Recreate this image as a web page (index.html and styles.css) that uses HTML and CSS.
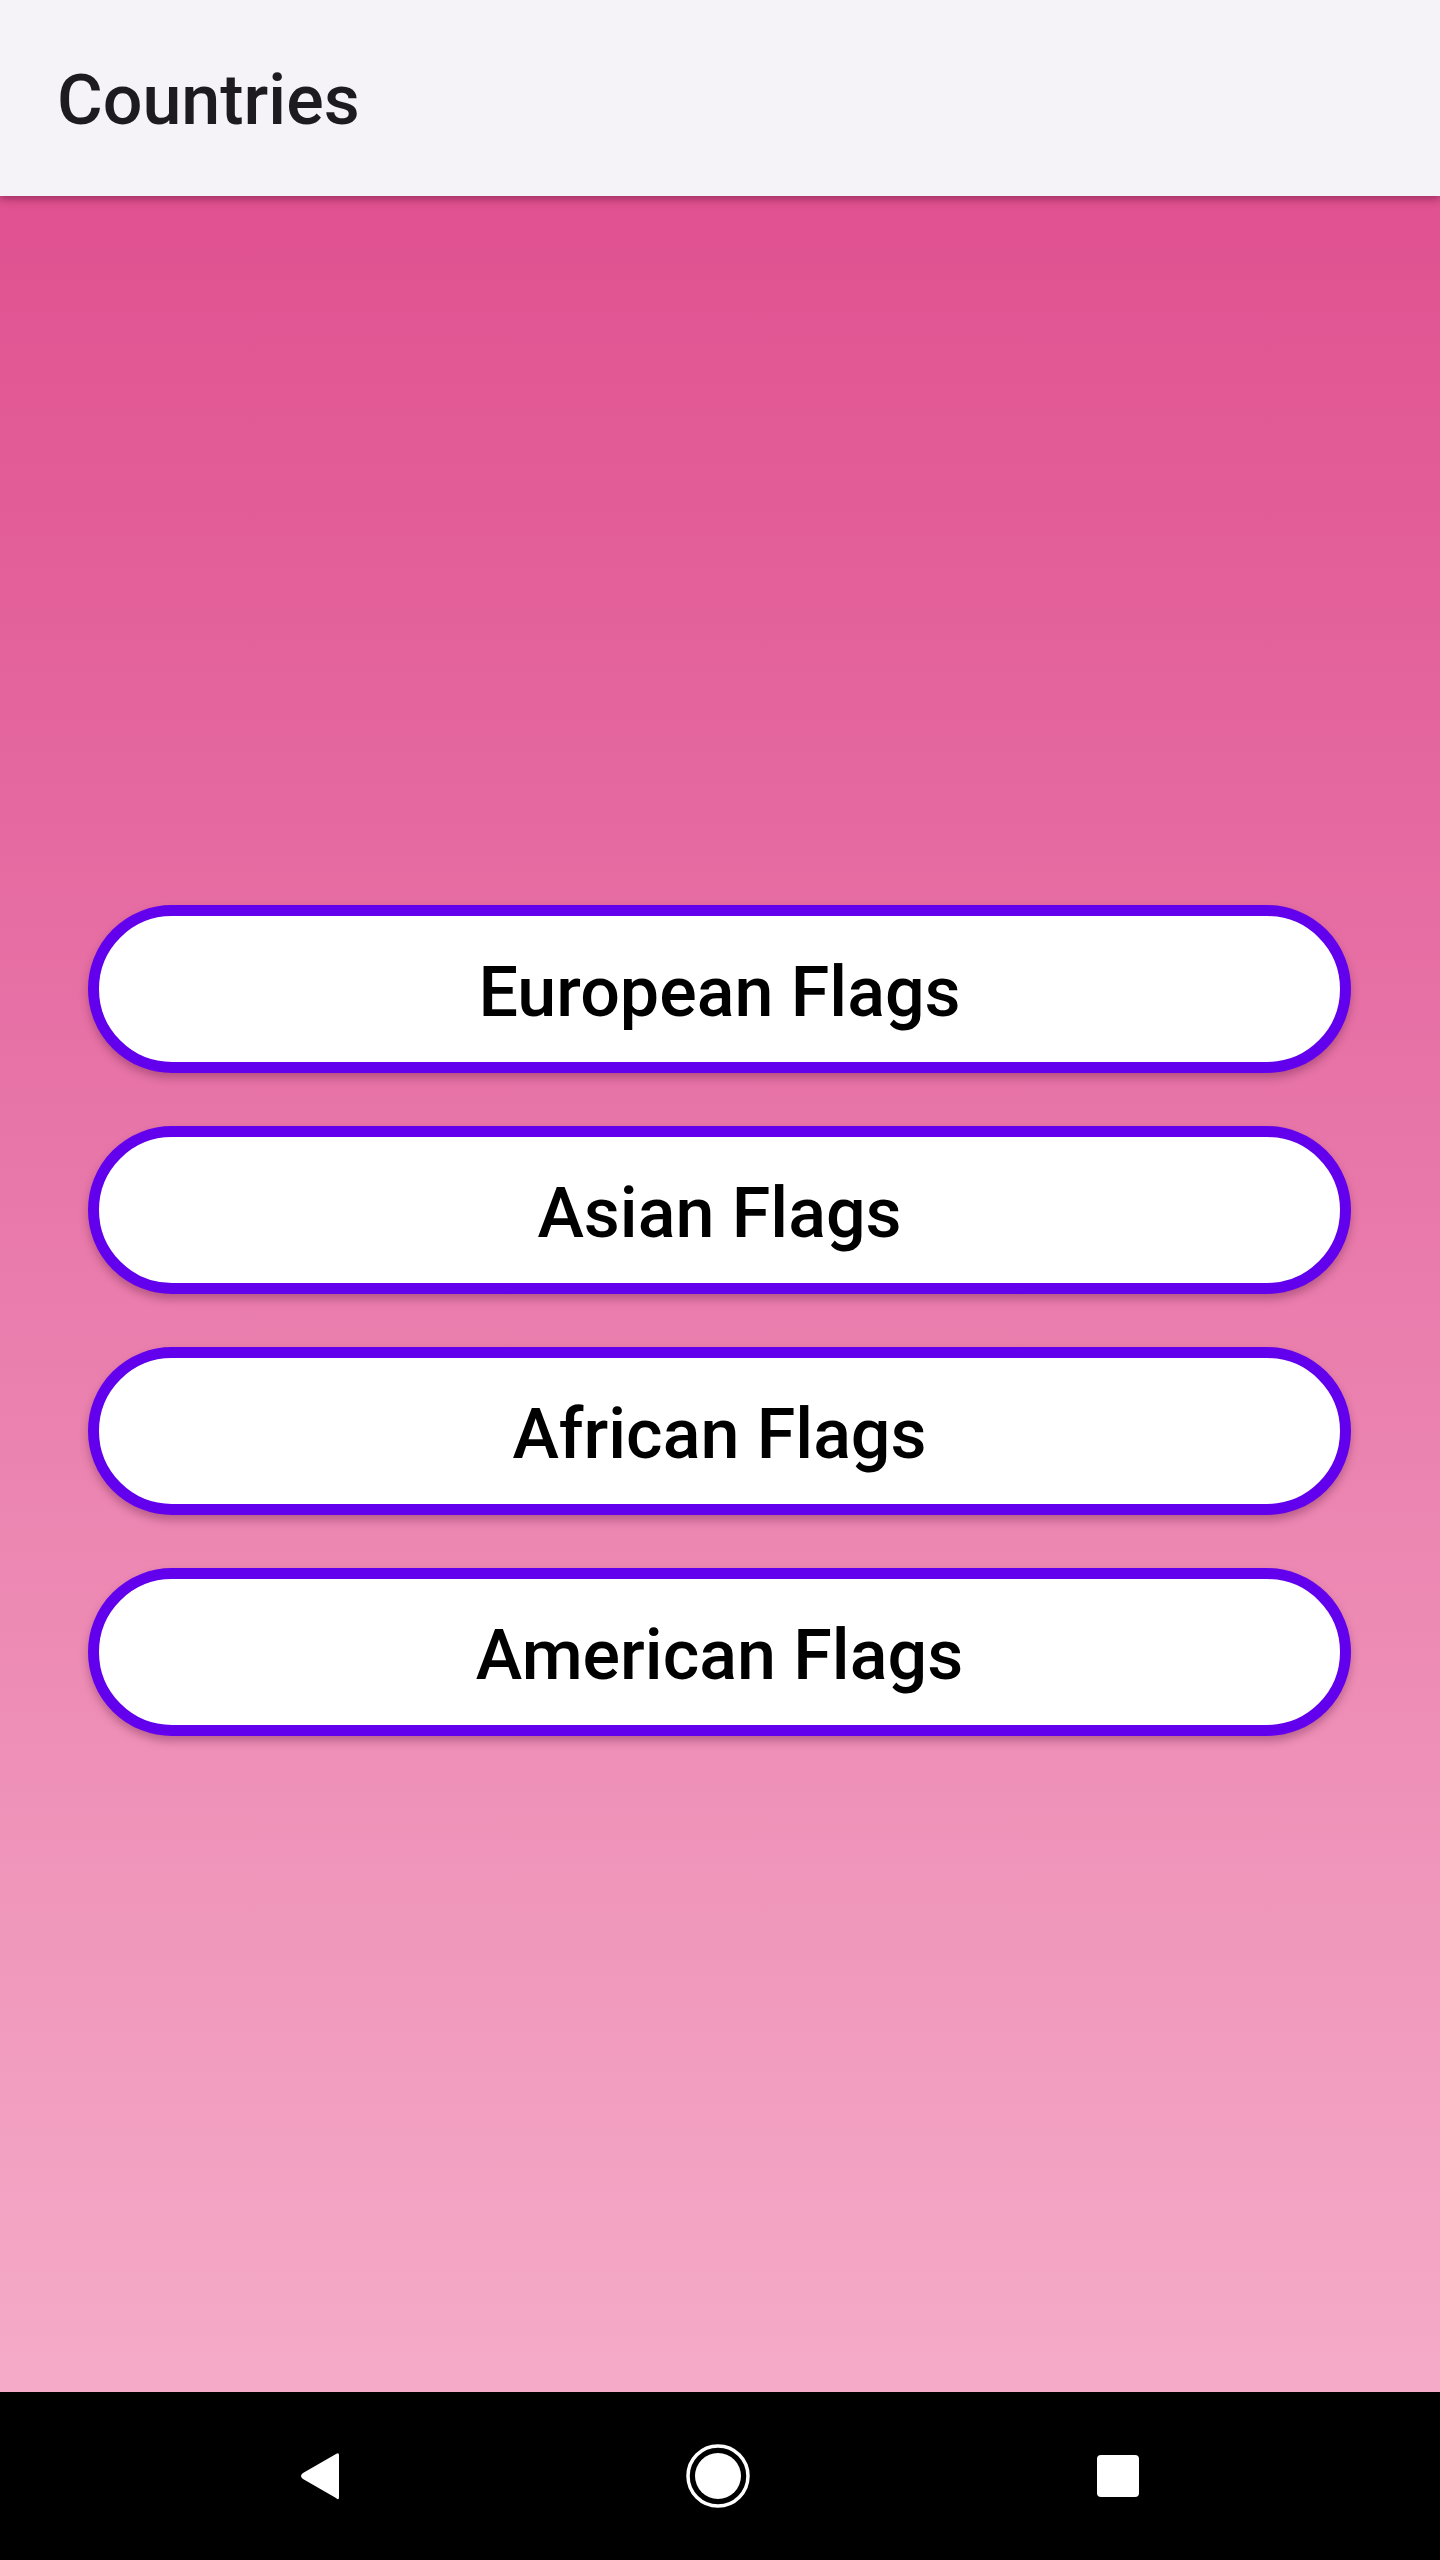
FILE: index.html
```html
<!DOCTYPE html>
<html lang="en">

<head>
  <meta charset="UTF-8">
  <title>Countries</title>
  <link rel="stylesheet" href="styles.css">
</head>

<body>
  <div id="app">
    <header class="app-bar">
      <h1 class="app-title">Countries</h1>
    </header>

    <main class="content">
      <div class="menu">
        <button class="menu-button">European Flags</button>
        <button class="menu-button">Asian Flags</button>
        <button class="menu-button">African Flags</button>
        <button class="menu-button">American Flags</button>
      </div>
    </main>

    <nav class="nav-bar">
      <svg class="nav-icon" width="44" height="48" viewBox="0 0 44 48">
        <path d="M40 3 L40 45 Q40 49 37 46 L4 27 Q0 24 4 21 L37 2 Q40 0 40 3 Z" fill="#fff" />
      </svg>
      <svg class="nav-icon" width="66" height="66" viewBox="0 0 66 66">
        <circle cx="33" cy="33" r="30" fill="none" stroke="#fff" stroke-width="3.5" />
        <circle cx="33" cy="33" r="23" fill="#fff" />
      </svg>
      <svg class="nav-icon" width="44" height="44" viewBox="0 0 44 44">
        <rect x="1" y="1" width="42" height="42" rx="4" fill="#fff" />
      </svg>
    </nav>
  </div>
</body>

</html>
```

FILE: styles.css
```css
* {
  box-sizing: border-box;
}

body {
  margin: 0;
  font-family: Roboto, "Noto Sans", sans-serif;
}

#app {
  display: flex;
  flex-direction: column;
  width: 1440px;
  height: 2560px;
}

.app-bar {
  position: relative;
  z-index: 1;
  display: flex;
  align-items: center;
  height: 196px;
  padding: 4px 0 0 57px;
  background: #f5f3f7;
  box-shadow: 0 3px 8px rgba(80, 0, 40, 0.45);
}

.app-title {
  margin: 0;
  font-size: 70px;
  font-weight: 500;
  color: #1d1b20;
}

.content {
  flex: 1;
  padding-top: 709px;
  background: linear-gradient(to bottom, #e05190, #e773a7 40%, #f5abc7);
}

.menu {
  display: flex;
  flex-direction: column;
  gap: 53px;
  width: 1263px;
  margin-left: 88px;
}

.menu-button {
  height: 168px;
  border: 11px solid #6200ee;
  border-radius: 84px;
  background: #fff;
  box-shadow: 0 5px 8px rgba(90, 20, 60, 0.35);
  font-family: Roboto, "Noto Sans", sans-serif;
  font-size: 70px;
  font-weight: 500;
  color: #000;
  padding: 5px 0 0;
}

.nav-bar {
  display: flex;
  align-items: center;
  height: 168px;
  background: #000;
}

.nav-icon:nth-child(1) {
  margin-left: 299px;
}

.nav-icon:nth-child(2) {
  margin-left: 342px;
}

.nav-icon:nth-child(3) {
  margin-left: 345px;
}
```
